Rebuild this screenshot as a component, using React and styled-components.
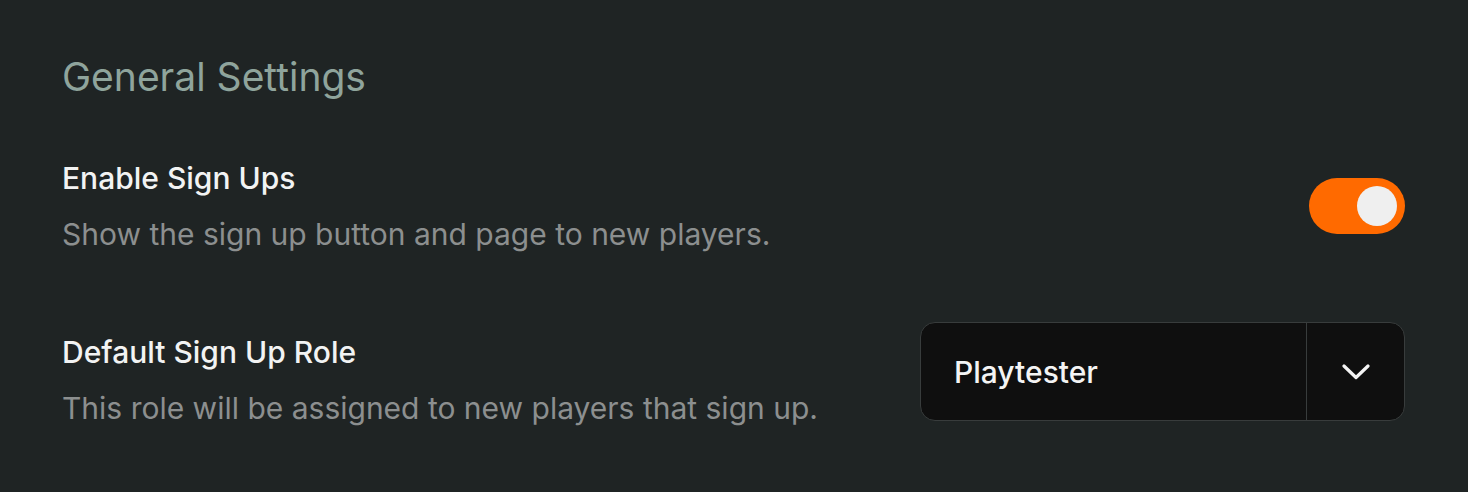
import React from "react";
import styled, { createGlobalStyle } from "styled-components";

const GlobalStyle = createGlobalStyle`
  html, body {
    margin: 0;
    padding: 0;
    background: #1f2424;
  }
  body {
    font-family: Inter, "Open Sans", sans-serif;
  }
`;

const Page = styled.div`
  width: 1468px;
  height: 492px;
  box-sizing: border-box;
  padding: 53px 63px 0 62px;
  background: #1f2424;
`;

const Heading = styled.h2`
  margin: 0 0 59px;
  font-size: 39px;
  font-weight: 400;
  color: #8fa49c;
  line-height: 48px;
`;

const Row = styled.div`
  display: flex;
  align-items: ${(props) => props.align || "center"};
  justify-content: space-between;
  margin-bottom: ${(props) => props.gap || 0}px;
`;

const TextBlock = styled.div`
  display: flex;
  flex-direction: column;
  gap: 20px;
  padding-top: ${(props) => props.offset || 0}px;
`;

const Title = styled.div`
  font-size: 30px;
  font-weight: 500;
  color: #f2f3f3;
  line-height: 36px;
`;

const Description = styled.div`
  font-size: 30px;
  color: #8c8f8f;
  line-height: 36px;
`;

const Toggle = styled.button`
  width: 96px;
  height: 56px;
  border: none;
  border-radius: 28px;
  padding: 0 8px;
  display: flex;
  align-items: center;
  justify-content: ${(props) => (props.on ? "flex-end" : "flex-start")};
  background: ${(props) => (props.on ? "#ff6a00" : "#444")};
  cursor: pointer;
`;

const Knob = styled.span`
  width: 40px;
  height: 40px;
  border-radius: 50%;
  background: #efefef;
`;

const Select = styled.div`
  width: 485px;
  height: 99px;
  box-sizing: border-box;
  display: flex;
  background: #0f0f0f;
  border: 1.5px solid #383c3c;
  border-radius: 15px;
`;

const SelectValue = styled.div`
  flex: 1;
  display: flex;
  align-items: center;
  padding-left: 33px;
  font-size: 30px;
  font-weight: 500;
  color: #f4f4f4;
  line-height: 36px;
`;

const SelectButton = styled.div`
  width: 97px;
  display: flex;
  align-items: center;
  justify-content: center;
  border-left: 1.5px solid #383c3c;
`;

const Chevron = () => (
  <svg width="28" height="16" viewBox="0 0 28 16" fill="none" stroke="#f4f4f4" strokeWidth="3.2" strokeLinecap="round" strokeLinejoin="round">
    <path d="M2 2l12 11.5L26 2" />
  </svg>
);

export default function App() {
  return (
    <>
      <GlobalStyle />
      <Page>
        <Heading>General Settings</Heading>
        <Row gap={70}>
          <TextBlock>
            <Title>Enable Sign Ups</Title>
            <Description>Show the sign up button and page to new players.</Description>
          </TextBlock>
          <Toggle on>
            <Knob />
          </Toggle>
        </Row>
        <Row align="flex-start">
          <TextBlock offset={12}>
            <Title>Default Sign Up Role</Title>
            <Description>This role will be assigned to new players that sign up.</Description>
          </TextBlock>
          <Select>
            <SelectValue>Playtester</SelectValue>
            <SelectButton>
              <Chevron />
            </SelectButton>
          </Select>
        </Row>
      </Page>
    </>
  );
}
